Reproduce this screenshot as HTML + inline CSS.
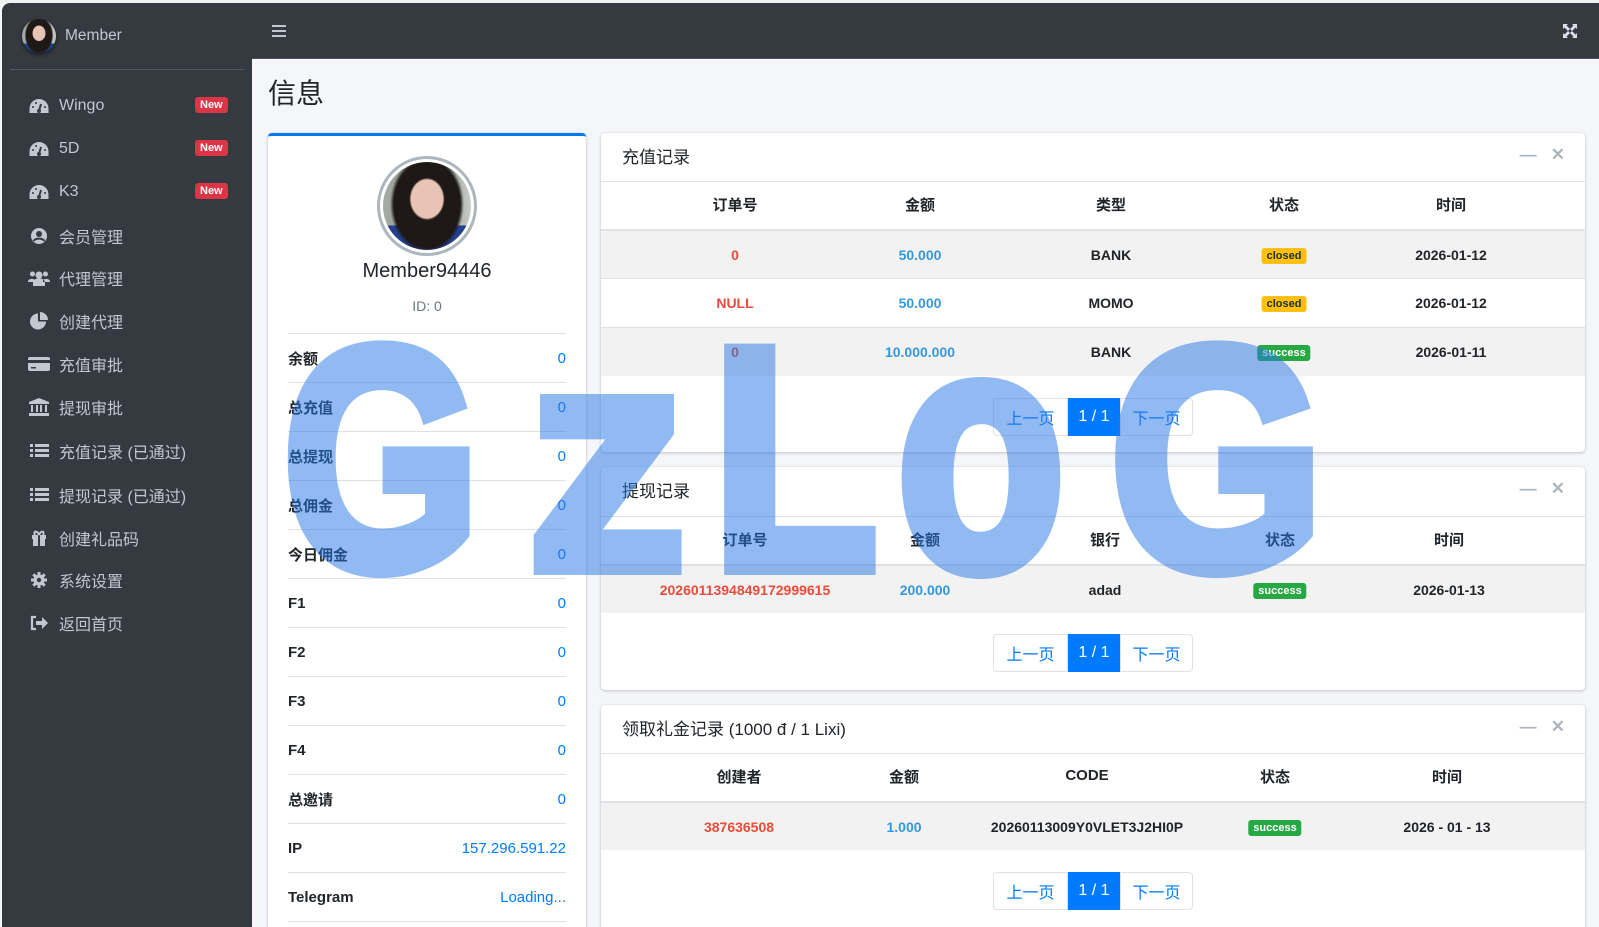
<!DOCTYPE html>
<html><head><meta charset="utf-8">
<style>
*{box-sizing:border-box;margin:0;padding:0}
html,body{width:1599px;height:927px;overflow:hidden}
body{background:#f4f6f9;font-family:"Liberation Sans","Noto Sans CJK SC",sans-serif;color:#212529}
#wrap{position:relative;width:1599px;height:927px;overflow:hidden}
.abs{position:absolute}
#topline{left:0;top:0;width:1599px;height:3px;background:#f0f1f2}
#side{left:2px;top:3px;width:250px;height:924px;background:#343a40;border-top-left-radius:8px}
#nav{left:252px;top:3px;width:1347px;height:56px;background:#343a40;border-bottom:1px solid #4b545c}
.mi{position:absolute;left:28px;height:24px;display:flex;align-items:center;color:#c2c7d0;font-size:16px}
.mi svg{width:22px;height:18px;margin-right:9px}
.new{position:absolute;left:195px;background:#dc3545;color:#fff;font-size:11px;font-weight:bold;padding:2px 5px;border-radius:3px}
.card{position:absolute;background:#fff;border-radius:4px;box-shadow:0 0 1px rgba(0,0,0,.125),0 1px 3px rgba(0,0,0,.2)}
.ctitle{position:absolute;left:21px;font-size:17px;color:#212529}
.tools{position:absolute;right:20px;color:#adb5bd;font-size:17px;font-weight:bold}
.hline{position:absolute;left:0;right:0;height:1px;background:#dee2e6}
.row{position:absolute;left:0;right:0;height:49px;border-top:1px solid #dee2e6}
.odd{background:#f2f2f2}
.th{position:absolute;transform:translateX(-50%);font-weight:bold;font-size:15px;white-space:nowrap}
.td{position:absolute;transform:translateX(-50%);font-weight:bold;font-size:14px;white-space:nowrap}
.red{color:#e74c3c}.blue{color:#3498db}
.bdg{font-size:11px;padding:2px 5px;border-radius:3px;font-weight:bold}
.closed{background:#ffc107;color:#1f2d3d}
.succ{background:#28a745;color:#fff}
.pg{position:absolute;height:38px;display:flex;font-size:16px}
.pg div{border:1px solid #dee2e6;display:flex;align-items:center;justify-content:center;color:#007bff;background:#fff}
.pg .act{background:#007bff;color:#fff;border-color:#007bff}
.li{position:absolute;left:20px;right:20px;height:49px;border-top:1px solid #dee2e6;display:flex;justify-content:space-between;align-items:center;font-size:15px}
.li b{font-weight:bold}
.li span{color:#007bff}
#wmw{position:absolute;left:0;top:0;width:1599px;height:927px;opacity:.5;pointer-events:none}
.wm{position:absolute;font-family:"Liberation Sans",sans-serif;font-weight:bold;font-size:316px;line-height:316px;height:316px;color:rgb(40,120,230);-webkit-text-stroke:14px rgb(40,120,230);transform-origin:left bottom;top:301px}
.av{border-radius:50%;background:
 radial-gradient(ellipse 20% 24% at 50% 42%,#e8c4b6 0 90%,transparent 100%),
 radial-gradient(ellipse 42% 55% at 50% 48%,#1e1816 0 90%,transparent 100%),
 linear-gradient(180deg,transparent 0 72%,#23408e 72%),
 linear-gradient(90deg,#a7aca6,#7d8a80 60%,#c9ccc7)}
</style></head><body><div id="wrap">
<div id="topline" class="abs"></div>
<div id="side" class="abs">
  <div class="abs av" style="left:20px;top:16px;width:34px;height:34px;box-shadow:0 2px 4px rgba(0,0,0,.5)"></div>
  <div class="abs" style="left:63px;top:24px;color:#c2c7d0;font-size:15.5px">Member</div>
  <div class="abs" style="left:8px;top:66px;width:234px;height:1px;background:#4f5962"></div>
</div>
<div class="mi" style="top:94px"><svg viewBox="0 0 22 18"><path d="M11 2A9.5 9.5 0 0 0 1.5 11.5V16h19v-4.5A9.5 9.5 0 0 0 11 2z" fill="#c2c7d0"/><path d="M11 14l2-7" stroke="#343a40" stroke-width="2"/><circle cx="11" cy="14" r="2" fill="#343a40"/><circle cx="5" cy="10" r="1" fill="#343a40"/><circle cx="8" cy="6" r="1" fill="#343a40"/><circle cx="17" cy="10" r="1" fill="#343a40"/></svg>Wingo</div>
<div class="new" style="top:97px">New</div>
<div class="mi" style="top:137px"><svg viewBox="0 0 22 18"><path d="M11 2A9.5 9.5 0 0 0 1.5 11.5V16h19v-4.5A9.5 9.5 0 0 0 11 2z" fill="#c2c7d0"/><path d="M11 14l2-7" stroke="#343a40" stroke-width="2"/><circle cx="11" cy="14" r="2" fill="#343a40"/><circle cx="5" cy="10" r="1" fill="#343a40"/><circle cx="8" cy="6" r="1" fill="#343a40"/><circle cx="17" cy="10" r="1" fill="#343a40"/></svg>5D</div>
<div class="new" style="top:140px">New</div>
<div class="mi" style="top:180px"><svg viewBox="0 0 22 18"><path d="M11 2A9.5 9.5 0 0 0 1.5 11.5V16h19v-4.5A9.5 9.5 0 0 0 11 2z" fill="#c2c7d0"/><path d="M11 14l2-7" stroke="#343a40" stroke-width="2"/><circle cx="11" cy="14" r="2" fill="#343a40"/><circle cx="5" cy="10" r="1" fill="#343a40"/><circle cx="8" cy="6" r="1" fill="#343a40"/><circle cx="17" cy="10" r="1" fill="#343a40"/></svg>K3</div>
<div class="new" style="top:183px">New</div>
<div class="mi" style="top:224px"><svg viewBox="0 0 22 18"><circle cx="11" cy="9" r="8" fill="#c2c7d0"/><circle cx="11" cy="7" r="3" fill="#343a40"/><path d="M5.5 14a6 4 0 0 1 11 0" stroke="#343a40" stroke-width="2" fill="none"/></svg>会员管理</div>
<div class="mi" style="top:266px"><svg viewBox="0 0 22 18"><circle cx="11" cy="6" r="3.5" fill="#c2c7d0"/><circle cx="4.5" cy="5" r="2.5" fill="#c2c7d0"/><circle cx="17.5" cy="5" r="2.5" fill="#c2c7d0"/><path d="M5 17v-3a6 5 0 0 1 12 0v3zM0 12a4 3 0 0 1 7-1v2H0zM22 12a4 3 0 0 0-7-1v2h7z" fill="#c2c7d0"/></svg>代理管理</div>
<div class="mi" style="top:309px"><svg viewBox="0 0 22 18"><path d="M10 1.5a8 8 0 1 0 8 8h-8z" fill="#c2c7d0"/><path d="M12 0v8h8A8 8 0 0 0 12 0z" fill="#c2c7d0"/></svg>创建代理</div>
<div class="mi" style="top:352px"><svg viewBox="0 0 22 18"><rect x="0" y="2" width="22" height="14" rx="2" fill="#c2c7d0"/><rect x="0" y="5" width="22" height="3" fill="#343a40"/><rect x="3" y="12" width="5" height="1.5" fill="#343a40"/></svg>充值审批</div>
<div class="mi" style="top:395px"><svg viewBox="0 0 22 18"><path d="M11 0L1 4v2h20V4z M3 7h2v7H3z M8 7h2v7H8z M12 7h2v7h-2z M17 7h2v7h-2z M1 15h20v3H1z" fill="#c2c7d0"/></svg>提现审批</div>
<div class="mi" style="top:439px"><svg viewBox="0 0 22 18"><path d="M2 2h3v3H2zM7 2h14v3H7zM2 7h3v3H2zM7 7h14v3H7zM2 12h3v3H2zM7 12h14v3H7z" fill="#c2c7d0"/></svg>充值记录 (已通过)</div>
<div class="mi" style="top:483px"><svg viewBox="0 0 22 18"><path d="M2 2h3v3H2zM7 2h14v3H7zM2 7h3v3H2zM7 7h14v3H7zM2 12h3v3H2zM7 12h14v3H7z" fill="#c2c7d0"/></svg>提现记录 (已通过)</div>
<div class="mi" style="top:526px"><svg viewBox="0 0 22 18"><path d="M4 6h14v4H4zM5 10h12v7H5z" fill="#c2c7d0"/><path d="M10 6h2v11h-2z" fill="#343a40"/><path d="M11 6C9 1 5 2 7 6M11 6c2-5 6-4 4 0" stroke="#c2c7d0" stroke-width="2" fill="none"/></svg>创建礼品码</div>
<div class="mi" style="top:568px"><svg viewBox="0 0 22 18"><circle cx="11" cy="9" r="5.5" fill="#c2c7d0"/><path d="M11 1v16M3 9h16M5.3 3.3l11.4 11.4M16.7 3.3L5.3 14.7" stroke="#c2c7d0" stroke-width="3"/><circle cx="11" cy="9" r="2.2" fill="#343a40"/></svg>系统设置</div>
<div class="mi" style="top:611px"><svg viewBox="0 0 22 18"><path d="M8 3H4v12h4" stroke="#c2c7d0" stroke-width="2.2" fill="none"/><path d="M8 7h6V3l6 6-6 6v-4H8z" fill="#c2c7d0"/></svg>返回首页</div>

<div id="nav" class="abs">
  <div class="abs" style="left:20px;top:22px;width:14px;height:2px;background:#c2c7d0;box-shadow:0 5px 0 #c2c7d0,0 10px 0 #c2c7d0"></div>
  <svg class="abs" style="left:1310px;top:20px" width="16" height="16" viewBox="0 0 16 16"><path d="M1 1h5L4.5 2.5 8 6l-2 2-3.5-3.5L1 6zM15 1v5l-1.5-1.5L10 8 8 6l3.5-3.5L10 1zM1 15v-5l1.5 1.5L6 8l2 2-3.5 3.5L6 15zM15 15h-5l1.5-1.5L8 10l2-2 3.5 3.5L15 10z" fill="#dde"/></svg>
</div>

<div class="abs" style="left:268px;top:72px;font-size:28px;color:#212529">信息</div>

<div class="card" style="left:268px;top:133px;width:318px;height:810px;border-top:3px solid #007bff">
  <div class="abs" style="left:109px;top:20px;width:100px;height:100px;border-radius:50%;border:3px solid #adb5bd;padding:3px;background:#fff">
    <div class="av" style="width:100%;height:100%"></div>
  </div>
  <div class="abs" style="left:0;width:318px;top:124px;text-align:center;font-size:20px;color:#212529">Member94446</div>
  <div class="abs" style="left:0;width:318px;top:162px;text-align:center;font-size:14px;color:#6c757d">ID: 0</div>
  <div class="li" style="top:197px"><b>余额</b><span>0</span></div>
  <div class="li" style="top:246px"><b>总充值</b><span>0</span></div>
  <div class="li" style="top:295px"><b>总提现</b><span>0</span></div>
  <div class="li" style="top:344px"><b>总佣金</b><span>0</span></div>
  <div class="li" style="top:393px"><b>今日佣金</b><span>0</span></div>
  <div class="li" style="top:442px"><b>F1</b><span>0</span></div>
  <div class="li" style="top:491px"><b>F2</b><span>0</span></div>
  <div class="li" style="top:540px"><b>F3</b><span>0</span></div>
  <div class="li" style="top:589px"><b>F4</b><span>0</span></div>
  <div class="li" style="top:638px"><b>总邀请</b><span>0</span></div>
  <div class="li" style="top:687px"><b>IP</b><span>157.296.591.22</span></div>
  <div class="li" style="top:736px"><b>Telegram</b><span>Loading...</span></div>
  <div class="li" style="top:785px"></div>
</div>

<div class="card" style="left:601px;top:133px;width:984px;height:319px">
  <div class="ctitle" style="top:10px">充值记录</div>
  <div class="tools" style="top:12px">—&nbsp;&nbsp;&nbsp;✕</div>
  <div class="hline" style="top:48px"></div>
  <div class="th" style="left:134px;top:61px">订单号</div><div class="th" style="left:319px;top:61px">金额</div><div class="th" style="left:510px;top:61px">类型</div><div class="th" style="left:683px;top:61px">状态</div><div class="th" style="left:850px;top:61px">时间</div>
  <div class="row odd" style="top:96px;border-top:2px solid #dee2e6"><div class="td red" style="left:134px;top:16px">0</div><div class="td blue" style="left:319px;top:16px">50.000</div><div class="td" style="left:510px;top:16px">BANK</div><div class="td" style="left:683px;top:15px"><span class="bdg closed">closed</span></div><div class="td" style="left:850px;top:16px">2026-01-12</div></div>
  <div class="row" style="top:145px"><div class="td red" style="left:134px;top:16px">NULL</div><div class="td blue" style="left:319px;top:16px">50.000</div><div class="td" style="left:510px;top:16px">MOMO</div><div class="td" style="left:683px;top:15px"><span class="bdg closed">closed</span></div><div class="td" style="left:850px;top:16px">2026-01-12</div></div>
  <div class="row odd" style="top:194px"><div class="td red" style="left:134px;top:16px">0</div><div class="td blue" style="left:319px;top:16px">10.000.000</div><div class="td" style="left:510px;top:16px">BANK</div><div class="td" style="left:683px;top:15px"><span class="bdg succ">success</span></div><div class="td" style="left:850px;top:16px">2026-01-11</div></div>
  <div class="pg" style="left:392px;top:265px"><div style="width:75px;border-radius:4px 0 0 4px">上一页</div><div class="act" style="width:52px">1 / 1</div><div style="width:73px;border-radius:0 4px 4px 0">下一页</div></div>
</div>

<div class="card" style="left:601px;top:467px;width:984px;height:223px">
  <div class="ctitle" style="top:10px">提现记录</div>
  <div class="tools" style="top:12px">—&nbsp;&nbsp;&nbsp;✕</div>
  <div class="hline" style="top:49px"></div>
  <div class="th" style="left:144px;top:62px">订单号</div><div class="th" style="left:324px;top:62px">金额</div><div class="th" style="left:504px;top:62px">银行</div><div class="th" style="left:679px;top:62px">状态</div><div class="th" style="left:848px;top:62px">时间</div>
  <div class="row odd" style="top:97px;border-top:2px solid #dee2e6"><div class="td red" style="left:144px;top:16px">2026011394849172999615</div><div class="td blue" style="left:324px;top:16px">200.000</div><div class="td" style="left:504px;top:16px">adad</div><div class="td" style="left:679px;top:15px"><span class="bdg succ">success</span></div><div class="td" style="left:848px;top:16px">2026-01-13</div></div>
  <div class="pg" style="left:392px;top:167px"><div style="width:75px;border-radius:4px 0 0 4px">上一页</div><div class="act" style="width:52px">1 / 1</div><div style="width:73px;border-radius:0 4px 4px 0">下一页</div></div>
</div>

<div class="card" style="left:601px;top:705px;width:984px;height:226px">
  <div class="ctitle" style="top:10px">领取礼金记录 (1000 đ / 1 Lixi)</div>
  <div class="tools" style="top:12px">—&nbsp;&nbsp;&nbsp;✕</div>
  <div class="hline" style="top:48px"></div>
  <div class="th" style="left:138px;top:61px">创建者</div><div class="th" style="left:303px;top:61px">金额</div><div class="th" style="left:486px;top:62px">CODE</div><div class="th" style="left:674px;top:61px">状态</div><div class="th" style="left:846px;top:61px">时间</div>
  <div class="row odd" style="top:96px;border-top:2px solid #dee2e6"><div class="td red" style="left:138px;top:16px">387636508</div><div class="td blue" style="left:303px;top:16px">1.000</div><div class="td" style="left:486px;top:16px">20260113009Y0VLET3J2HI0P</div><div class="td" style="left:674px;top:15px"><span class="bdg succ">success</span></div><div class="td" style="left:846px;top:16px">2026 - 01 - 13</div></div>
  <div class="pg" style="left:392px;top:167px"><div style="width:75px;border-radius:4px 0 0 4px">上一页</div><div class="act" style="width:52px">1 / 1</div><div style="width:73px;border-radius:0 4px 4px 0">下一页</div></div>
</div>

<div id="wmw">
<div class="wm" style="left:283px;transform:scaleX(.8)">G</div>
<div class="wm" style="left:528px;transform:scaleX(1)">z</div>
<div class="wm" style="left:712px;transform:scaleX(.86)">L</div>
<div class="wm" style="left:897px;top:305px;transform:scaleX(.87) scaleY(1.08)">o</div>
<div class="wm" style="left:1110px;transform:scaleX(.87)">G</div>
</div>
</div></body></html>
